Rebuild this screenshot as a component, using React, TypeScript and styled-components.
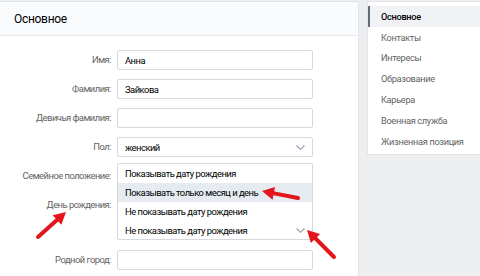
import React from "react";
import styled, { createGlobalStyle } from "styled-components";

const Global = createGlobalStyle`
  html, body { margin: 0; padding: 0; background: #edeef0; }
  body { font-family: Roboto, "Open Sans", "Liberation Sans", sans-serif; -webkit-font-smoothing: antialiased; }
  * { box-sizing: border-box; }
`;

const Page = styled.div`
  position: relative;
  width: 480px;
  height: 276px;
  overflow: hidden;
  display: flex;
  align-items: flex-start;
  gap: 10px;
  padding-top: 2px;
`;

const Panel = styled.div`
  width: 358px;
  height: 300px;
  flex: none;
  background: #fff;
  box-shadow: 0 0 0 1px #e3e4e8;
`;

const Header = styled.div`
  height: 34px;
  display: flex;
  align-items: center;
  padding-left: 14px;
  background: #fafbfc;
  border-bottom: 1px solid #e7e8ec;
  font-size: 12px;
  letter-spacing: -0.3px;
  color: #000;
`;

const Form = styled.div`
  padding-top: 14px;
  display: flex;
  flex-direction: column;
`;

const Row = styled.div<{ $gap?: number }>`
  display: grid;
  grid-template-columns: 111px 196px;
  column-gap: 6px;
  align-items: start;
  margin-bottom: ${(p) => (p.$gap ?? 9)}px;
`;

const Label = styled.div`
  height: 20px;
  line-height: 20px;
  text-align: right;
  font-size: 9.4px;
  letter-spacing: -0.5px;
  color: #626262;
  white-space: nowrap;
`;

const Field = styled.div<{ $select?: boolean }>`
  position: relative;
  height: 20px;
  border: 1px solid #d3d9de;
  border-radius: 2px;
  background: #fff;
  padding: 0 7px;
  display: flex;
  align-items: center;
  font-size: 9.4px;
  letter-spacing: -0.5px;
  color: #000;
`;

const Stack = styled.div`
  display: flex;
  flex-direction: column;
  gap: 5px;
`;

const Chevron = styled.svg`
  position: absolute;
  right: 7px;
  top: 7px;
  width: 9px;
  height: 5px;
`;

const DropList = styled.div`
  position: absolute;
  left: -1px;
  right: -1px;
  bottom: 100%;
  background: #fff;
  border: 1px solid #d3d9de;
  border-bottom: none;
  border-radius: 2px 2px 0 0;
  display: flex;
  flex-direction: column;
`;

const Option = styled.div<{ $active?: boolean }>`
  height: 19px;
  display: flex;
  align-items: center;
  padding: 0 7px;
  font-size: 9.4px;
  letter-spacing: -0.5px;
  color: #000;
  background: ${(p) => (p.$active ? "#e5ebf1" : "#fff")};
`;

const Menu = styled.div`
  width: 150px;
  flex: none;
  background: #fff;
  box-shadow: 0 0 0 1px #e3e4e8;
  padding: 4px 0 2.4px;
  display: flex;
  flex-direction: column;
`;

const MenuItem = styled.div<{ $active?: boolean }>`
  height: 20.8px;
  display: flex;
  align-items: center;
  padding-left: 11px;
  font-size: 9.2px;
  letter-spacing: -0.3px;
  color: ${(p) => (p.$active ? "#000" : "#626262")};
  font-weight: ${(p) => (p.$active ? 500 : 400)};
  background: ${(p) => (p.$active ? "#f0f2f5" : "transparent")};
  border-left: 2px solid ${(p) => (p.$active ? "#626d7a" : "transparent")};
`;

const Arrows = styled.svg`
  position: absolute;
  left: 0;
  top: 0;
  width: 480px;
  height: 276px;
  pointer-events: none;
`;

const Down = () => (
  <Chevron viewBox="0 0 9 5">
    <path d="M0.5 0.5 L4.5 4.3 L8.5 0.5" fill="none" stroke="#929eb0" strokeWidth="1.1" />
  </Chevron>
);

function arrow(x1: number, y1: number, x2: number, y2: number) {
  const dx = x2 - x1;
  const dy = y2 - y1;
  const len = Math.hypot(dx, dy);
  const ux = dx / len;
  const uy = dy / len;
  const head = 12;
  const half = 6.5;
  const bx = x2 - ux * head;
  const by = y2 - uy * head;
  const px = -uy;
  const py = ux;
  return (
    <g>
      <line x1={x1} y1={y1} x2={bx + ux} y2={by + uy} stroke="#e3161b" strokeWidth="4" strokeLinecap="round" />
      <polygon
        points={`${x2},${y2} ${bx + px * half},${by + py * half} ${bx - px * half},${by - py * half}`}
        fill="#e3161b"
      />
    </g>
  );
}

const rows: [string, string][] = [
  ["Имя:", "Анна"],
  ["Фамилия:", "Зайкова"],
  ["Девичья фамилия:", ""],
];

const menu = [
  "Основное",
  "Контакты",
  "Интересы",
  "Образование",
  "Карьера",
  "Военная служба",
  "Жизненная позиция",
];

export default function App() {
  return (
    <>
      <Global />
      <Page>
        <Panel>
          <Header>Основное</Header>
          <Form>
            {rows.map(([l, v]) => (
              <Row key={l}>
                <Label>{l}</Label>
                <Field>{v}</Field>
              </Row>
            ))}
            <Row>
              <Label>Пол:</Label>
              <Field $select>
                женский
                <Down />
              </Field>
            </Row>
            <Row>
              <Label>Семейное положение:</Label>
              <Field $select />
            </Row>
            <Row $gap={10}>
              <Label>День рождения:</Label>
              <Stack>
                <Field $select />
                <Field $select>
                  Не показывать дату рождения
                  <Down />
                  <DropList>
                    <Option>Показывать дату рождения</Option>
                    <Option $active>Показывать только месяц и день</Option>
                    <Option>Не показывать дату рождения</Option>
                  </DropList>
                </Field>
              </Stack>
            </Row>
            <Row>
              <Label>Родной город:</Label>
              <Field />
            </Row>
          </Form>
        </Panel>
        <Menu>
          {menu.map((m, i) => (
            <MenuItem key={m} $active={i === 0}>
              {m}
            </MenuItem>
          ))}
        </Menu>
        <Arrows viewBox="0 0 480 276">
          {arrow(38, 237, 66, 212)}
          {arrow(298, 198, 262, 191)}
          {arrow(334, 257, 307, 230)}
        </Arrows>
      </Page>
    </>
  );
}
